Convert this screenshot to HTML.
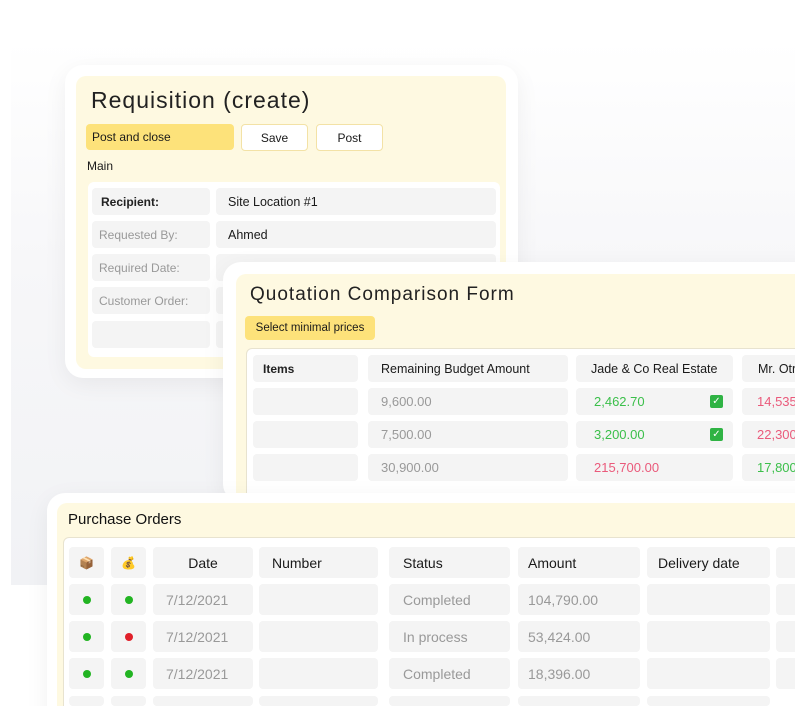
<!DOCTYPE html>
<html style="width:795px;height:706px;overflow:hidden"><head><style>
*{box-sizing:border-box;margin:0;padding:0}
body{width:795px;height:706px;overflow:hidden;background:#fff;font-family:"Liberation Sans",sans-serif;position:relative;color:#1a1a1a}
.a{position:absolute}
.bg{left:11px;top:40px;width:784px;height:545px;background:linear-gradient(#fff 0%,#f7f7f9 40%,#f1f2f5 100%)}
.outer{background:#fff;border-radius:18px;box-shadow:0 6px 24px rgba(0,0,0,.06)}
.inner{background:#fef9e1;border-radius:10px}
.cell{position:absolute;background:#f4f4f4;border-radius:4px;font-size:13px;display:flex;align-items:center;padding-left:10px;white-space:nowrap;overflow:hidden}
.panel{background:#fff;border-radius:6px}
.btn{position:absolute;border-radius:4px;font-size:12px;display:flex;align-items:center;justify-content:center}
.g{color:#999}.gr{color:#3bbf4a}.rd{color:#ea5a7b}
.dot{width:8px;height:8px;border-radius:50%;display:inline-block}
.h{font-weight:bold;color:#222}
</style></head><body>
<div class="a bg"></div>

<!-- Card 1 -->
<div class="a outer" style="left:65px;top:65px;width:453px;height:313px"></div>
<div class="a inner" style="left:76px;top:76px;width:430px;height:293px"></div>
<div class="a" style="left:91px;top:87px;font-size:23px;letter-spacing:1px;color:#222">Requisition (create)</div>
<div class="btn" style="left:86px;top:124px;width:148px;height:26px;background:#fde27a;justify-content:flex-start;padding-left:6px">Post and close</div>
<div class="btn" style="left:241px;top:124px;width:67px;height:27px;background:#fff;border:1px solid #f3e2a6">Save</div>
<div class="btn" style="left:316px;top:124px;width:67px;height:27px;background:#fff;border:1px solid #f3e2a6">Post</div>
<div class="a" style="left:87px;top:159px;font-size:12px">Main</div>
<div class="a panel" style="left:88px;top:182px;width:412px;height:175px"></div>
<div class="cell h" style="left:92px;top:188px;width:118px;height:27px;font-size:12px;padding-left:9px">Recipient:</div>
<div class="cell" style="left:216px;top:188px;width:280px;height:27px;font-size:12.5px;padding-left:12px">Site Location #1</div>
<div class="cell g" style="left:92px;top:221px;width:118px;height:27px;font-size:12px;padding-left:7px">Requested By:</div>
<div class="cell" style="left:216px;top:221px;width:280px;height:27px;font-size:12.5px;padding-left:12px">Ahmed</div>
<div class="cell g" style="left:92px;top:254px;width:118px;height:27px;font-size:12px;padding-left:7px">Required Date:</div>
<div class="cell" style="left:216px;top:254px;width:280px;height:27px"></div>
<div class="cell g" style="left:92px;top:287px;width:118px;height:27px;font-size:12px;padding-left:7px">Customer Order:</div>
<div class="cell" style="left:216px;top:287px;width:280px;height:27px"></div>
<div class="cell" style="left:92px;top:321px;width:118px;height:27px"></div>
<div class="cell" style="left:216px;top:321px;width:280px;height:27px"></div>

<!-- Card 2 -->
<div class="a outer" style="left:223px;top:262px;width:600px;height:240px"></div>
<div class="a inner" style="left:236px;top:274px;width:580px;height:230px"></div>
<div class="a" style="left:250px;top:284px;font-size:19px;letter-spacing:1px;color:#222">Quotation Comparison Form</div>
<div class="btn" style="left:245px;top:316px;width:130px;height:24px;background:#fde27a;font-size:11.5px">Select minimal prices</div>
<div class="a panel" style="left:246px;top:348px;width:560px;height:160px;border:1px solid #e8e3cf"></div>
<div class="cell h" style="left:253px;top:355px;width:105px;height:27px;font-size:12px">Items</div>
<div class="cell" style="left:368px;top:355px;width:200px;height:27px;font-size:12.5px;padding-left:13px">Remaining Budget Amount</div>
<div class="cell" style="left:576px;top:355px;width:157px;height:27px;font-size:12.5px;padding-left:15px">Jade &amp; Co Real Estate</div>
<div class="cell" style="left:742px;top:355px;width:70px;height:27px;font-size:12.5px;padding-left:16px">Mr. Otr</div>

<div class="cell" style="left:253px;top:388px;width:105px;height:27px"></div>
<div class="cell g" style="left:368px;top:388px;width:200px;height:27px;padding-left:13px">9,600.00</div>
<div class="cell gr" style="left:576px;top:388px;width:157px;height:27px;padding-left:18px">2,462.70<span style="position:absolute;right:10px;top:7px;width:13px;height:13px;background:#2fb344;border-radius:2px;color:#fff;font-size:10px;line-height:13px;text-align:center">✓</span></div>
<div class="cell rd" style="left:742px;top:388px;width:70px;height:27px;padding-left:15px">14,535</div>

<div class="cell" style="left:253px;top:421px;width:105px;height:27px"></div>
<div class="cell g" style="left:368px;top:421px;width:200px;height:27px;padding-left:13px">7,500.00</div>
<div class="cell gr" style="left:576px;top:421px;width:157px;height:27px;padding-left:18px">3,200.00<span style="position:absolute;right:10px;top:7px;width:13px;height:13px;background:#2fb344;border-radius:2px;color:#fff;font-size:10px;line-height:13px;text-align:center">✓</span></div>
<div class="cell rd" style="left:742px;top:421px;width:70px;height:27px;padding-left:15px">22,300</div>

<div class="cell" style="left:253px;top:454px;width:105px;height:27px"></div>
<div class="cell g" style="left:368px;top:454px;width:200px;height:27px;padding-left:13px">30,900.00</div>
<div class="cell rd" style="left:576px;top:454px;width:157px;height:27px;padding-left:18px">215,700.00</div>
<div class="cell gr" style="left:742px;top:454px;width:70px;height:27px;padding-left:15px">17,800</div>

<!-- Card 3 -->
<div class="a outer" style="left:47px;top:493px;width:780px;height:240px"></div>
<div class="a inner" style="left:57px;top:503px;width:760px;height:230px"></div>
<div class="a" style="left:68px;top:511px;font-size:15px;color:#111">Purchase Orders</div>
<div class="a panel" style="left:63px;top:537px;width:750px;height:200px;border:1px solid #e8e3cf"></div>
<div class="cell" style="left:69px;top:547px;width:35px;height:31px;justify-content:center;padding:0;font-size:12px">📦</div>
<div class="cell" style="left:111px;top:547px;width:35px;height:31px;justify-content:center;padding:0;font-size:12px">💰</div>
<div class="cell" style="left:153px;top:547px;width:100px;height:31px;justify-content:center;padding:0;font-size:14px">Date</div>
<div class="cell" style="left:259px;top:547px;width:119px;height:31px;font-size:14px;padding-left:13px">Number</div>
<div class="cell" style="left:389px;top:547px;width:121px;height:31px;font-size:14px;padding-left:14px">Status</div>
<div class="cell" style="left:518px;top:547px;width:122px;height:31px;font-size:14px">Amount</div>
<div class="cell" style="left:647px;top:547px;width:123px;height:31px;font-size:14px;padding-left:11px">Delivery date</div>
<div class="cell" style="left:776px;top:547px;width:30px;height:31px"></div>

<div class="cell" style="left:69px;top:584px;width:35px;height:31px;justify-content:center;padding:0"><span class="dot" style="background:#22b422"></span></div>
<div class="cell" style="left:111px;top:584px;width:35px;height:31px;justify-content:center;padding:0"><span class="dot" style="background:#22b422"></span></div>
<div class="cell g" style="left:153px;top:584px;width:100px;height:31px;font-size:14px;padding-left:13px">7/12/2021</div>
<div class="cell" style="left:259px;top:584px;width:119px;height:31px"></div>
<div class="cell g" style="left:389px;top:584px;width:121px;height:31px;font-size:14px;padding-left:14px">Completed</div>
<div class="cell g" style="left:518px;top:584px;width:122px;height:31px;font-size:14px">104,790.00</div>
<div class="cell" style="left:647px;top:584px;width:123px;height:31px"></div>
<div class="cell" style="left:776px;top:584px;width:30px;height:31px"></div>

<div class="cell" style="left:69px;top:621px;width:35px;height:31px;justify-content:center;padding:0"><span class="dot" style="background:#22b422"></span></div>
<div class="cell" style="left:111px;top:621px;width:35px;height:31px;justify-content:center;padding:0"><span class="dot" style="background:#e0202a"></span></div>
<div class="cell g" style="left:153px;top:621px;width:100px;height:31px;font-size:14px;padding-left:13px">7/12/2021</div>
<div class="cell" style="left:259px;top:621px;width:119px;height:31px"></div>
<div class="cell g" style="left:389px;top:621px;width:121px;height:31px;font-size:14px;padding-left:14px">In process</div>
<div class="cell g" style="left:518px;top:621px;width:122px;height:31px;font-size:14px">53,424.00</div>
<div class="cell" style="left:647px;top:621px;width:123px;height:31px"></div>
<div class="cell" style="left:776px;top:621px;width:30px;height:31px"></div>

<div class="cell" style="left:69px;top:658px;width:35px;height:31px;justify-content:center;padding:0"><span class="dot" style="background:#22b422"></span></div>
<div class="cell" style="left:111px;top:658px;width:35px;height:31px;justify-content:center;padding:0"><span class="dot" style="background:#22b422"></span></div>
<div class="cell g" style="left:153px;top:658px;width:100px;height:31px;font-size:14px;padding-left:13px">7/12/2021</div>
<div class="cell" style="left:259px;top:658px;width:119px;height:31px"></div>
<div class="cell g" style="left:389px;top:658px;width:121px;height:31px;font-size:14px;padding-left:14px">Completed</div>
<div class="cell g" style="left:518px;top:658px;width:122px;height:31px;font-size:14px">18,396.00</div>
<div class="cell" style="left:647px;top:658px;width:123px;height:31px"></div>
<div class="cell" style="left:776px;top:658px;width:30px;height:31px"></div>

<div class="cell" style="left:69px;top:696px;width:35px;height:10px"></div>
<div class="cell" style="left:111px;top:696px;width:35px;height:10px"></div>
<div class="cell" style="left:153px;top:696px;width:100px;height:10px"></div>
<div class="cell" style="left:259px;top:696px;width:119px;height:10px"></div>
<div class="cell" style="left:389px;top:696px;width:121px;height:10px"></div>
<div class="cell" style="left:518px;top:696px;width:122px;height:10px"></div>
<div class="cell" style="left:647px;top:696px;width:123px;height:10px"></div>
</body></html>
